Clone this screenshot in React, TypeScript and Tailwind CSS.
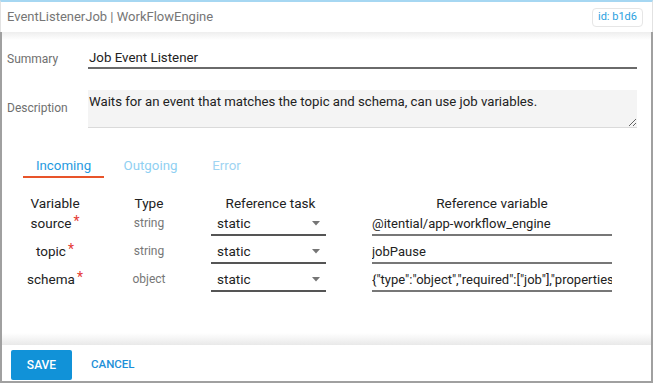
import { ChangeEvent, useState } from "react";

type Row = { name: string; type: string; task: string; value: string };

const rows: Row[] = [
    { name: "source", type: "string", task: "static", value: "@itential/app-workflow_engine" },
    { name: "topic", type: "string", task: "static", value: "jobPause" },
    { name: "schema", type: "object", task: "static", value: '{"type":"object","required":["job"],"properties":{"job":{"type":"object"}}}' },
];

const tabs = [
    { label: "Incoming", w: "w-[81px]", color: "text-[#1f9ae0]" },
    { label: "Outgoing", w: "w-[93px]", color: "text-[#8fd0f2]" },
    { label: "Error", w: "w-[59px]", color: "text-[#9fd4f2]" },
];

const Caret = () => (
    <svg width="8" height="5" viewBox="0 0 8 5" className="shrink-0">
        <path d="M0 0 L8 0 L4 4.5 Z" fill="#757575" />
    </svg>
);

export default function App() {
    const [summary, setSummary] = useState("Job Event Listener");
    const [active, setActive] = useState(0);

    return (
        <div className="w-[653px] h-[383px] bg-white flex flex-col overflow-hidden font-['Roboto','Liberation_Sans',sans-serif]">
            {/* header */}
            <div className="h-[32px] shrink-0 border-t-2 border-t-[#a6d7f2] border-x border-x-[#e2e2e2] flex items-center justify-between pl-[6px] pr-[9px]">
                <span className="text-[13px] text-[#767676]">EventListenerJob | WorkFlowEngine</span>
                <span className="h-[19px] px-[5px] flex items-center rounded-[4px] border border-[#e6e6e6] text-[11px] text-[#2a9fe0]">id: b1d6</span>
            </div>

            <div className="flex-1 flex flex-col border-x-2 border-b-2 border-[#a0a0a0]">
                <div className="h-[8px] shrink-0 bg-gradient-to-b from-[#eeeeee] to-white" />

                {/* summary */}
                <div className="mt-[8px] flex items-center pl-[5px] pr-[14px]">
                    <label className="w-[81px] text-[12px] text-[#6f6f6f]">Summary</label>
                    <input
                        value={summary}
                        onChange={(e: ChangeEvent<HTMLInputElement>) => setSummary(e.target.value)}
                        className="flex-1 h-[21px] border-b-2 border-[#6a6a6a] outline-none text-[13.3px] text-[#222] px-[1px] pb-[1px]"
                    />
                </div>

                {/* description */}
                <div className="mt-[21px] flex items-start pl-[5px] pr-[14px]">
                    <label className="w-[81px] pt-[9px] text-[12px] text-[#6f6f6f]">Description</label>
                    <textarea
                        defaultValue="Waits for an event that matches the topic and schema, can use job variables."
                        className="flex-1 h-[38px] bg-[#f4f4f4] border-b border-[#dadada] outline-none text-[13.2px] leading-[20px] text-[#222] px-[1px] pt-[2px]"
                    />
                </div>

                {/* tabs */}
                <div className="mt-[24px] ml-[21px] flex">
                    {tabs.map((t, i) => (
                        <button
                            key={t.label}
                            onClick={() => setActive(i)}
                            className={`${t.w} h-[26px] pt-[3px] leading-[20px] text-[13.3px] text-center border-b-2 ${i === active ? "border-[#e8542a] text-[#1f9ae0]" : "border-transparent " + t.color}`}
                        >
                            {t.label}
                        </button>
                    ))}
                </div>

                {/* table */}
                <div className="mt-[16px] ml-[8px] flex flex-col gap-[4px] text-[#222]">
                    <div className="flex h-[18px] -mb-[4px] text-[13.6px] leading-[18px]">
                        <div className="w-[90px] text-center">Variable</div>
                        <div className="w-[98px] text-center">Type</div>
                        <div className="ml-[13px] w-[115px] text-center pl-[4px]">Reference task</div>
                        <div className="ml-[46px] w-[240px] text-center">Reference variable</div>
                    </div>
                    {rows.map((r) => (
                        <div key={r.name} className="flex h-[24px]">
                            <div className="w-[90px] flex items-center justify-center pb-[2px] text-[13.5px]">
                                {r.name}
                                <span className="text-[#e53935] ml-[2px] relative -top-[2px] text-[14px]">*</span>
                            </div>
                            <div className="w-[98px] flex items-center justify-center pb-[2px] text-[12px] text-[#777]">{r.type}</div>
                            <div className="ml-[13px] w-[115px] flex items-center justify-between border-b-2 border-[#555] pl-[6px] pr-[6px] text-[13.5px]">
                                <span>{r.task}</span>
                                <Caret />
                            </div>
                            <div className="ml-[46px] w-[240px] flex items-end border-b-2 border-[#777] pb-[1px] overflow-hidden whitespace-nowrap text-[13px] leading-[18px]">
                                {r.value}
                            </div>
                        </div>
                    ))}
                </div>

                <div className="flex-1" />

                {/* footer */}
                <div className="h-[12px] shrink-0 bg-gradient-to-b from-white to-[#e9e9e9]" />
                <div className="h-[36px] shrink-0 flex items-start pt-[5px] pl-[9px]">
                    <button className="w-[61px] h-[30px] rounded-[2px] bg-[#1192d8] text-white text-[12px] font-medium">SAVE</button>
                    <button className="ml-[19px] h-[30px] text-[11.5px] font-medium text-[#1e90d8]">CANCEL</button>
                </div>
            </div>
        </div>
    );
}
